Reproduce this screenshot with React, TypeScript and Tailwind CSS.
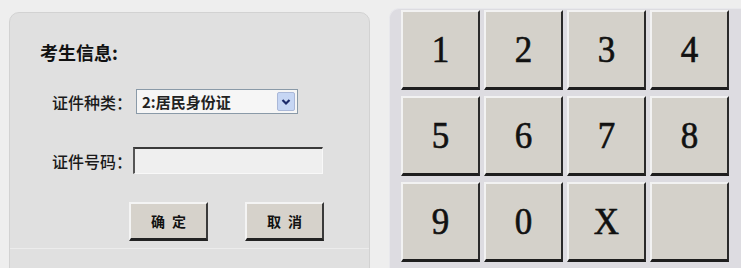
import React from "react";

const cjk = { fontFamily: '"Noto Sans CJK SC", "Noto Sans", sans-serif' };

function KeyBtn({ label }: { label: string }) {
  return (
    <div className="flex items-center justify-center bg-[#d4d1ca] border-t-2 border-l-2 border-t-[#f2f2f2] border-l-[#f2f2f2] border-r-2 border-b-[3px] border-r-[#2a2a2a] border-b-[#1e1e1e] text-[35px] text-[#111] leading-none [-webkit-text-stroke:0.6px_#111]" style={{ fontFamily: '"Liberation Serif", "Times New Roman", serif' }}>
      <span className="inline-block scale-y-[1.08]">{label}</span>
    </div>
  );
}

function FormBtn({ label }: { label: string }) {
  return (
    <div className="w-[79px] h-[39px] flex items-center justify-center bg-[#d6d2cb] border-t-2 border-l-2 border-t-[#f4f4f4] border-l-[#f4f4f4] border-r-2 border-b-[3px] border-r-[#3a3a3a] border-b-[#222] text-[14px] font-bold text-[#111] tracking-[7px] pl-[7px]" style={cjk}>
      {label}
    </div>
  );
}

export default function App() {
  const keys = ["1", "2", "3", "4", "5", "6", "7", "8", "9", "0", "X", ""];
  return (
    <div className="w-[741px] h-[268px] bg-[#eeeeee] flex overflow-hidden">
      <div className="ml-[9px] mt-[12px] w-[361px] h-[270px] rounded-t-[10px] bg-[#e0e0e0] border border-[#d2d2d2] pl-[30px] pt-[29px] flex flex-col" style={cjk}>
        <div className="h-[20px] leading-[20px] text-[18px] font-bold text-[#111]">考生信息:</div>
        <div className="ml-[12px] mt-[27px] flex items-center h-[25px]">
          <div className="w-[84px] text-[16px] font-medium text-[#1a1a1a]">证件种类：</div>
          <div className="w-[162px] h-[25px] bg-[#f6f6f6] border border-[#8a9aa8] flex items-center pl-[5px] pr-[2px]">
            <span className="flex-1 text-[15px] font-bold text-[#222] leading-none">2:居民身份证</span>
            <div className="w-[18px] h-[19px] rounded-[2px] bg-[#c6d6f4] border border-[#aab8d8] flex items-center justify-center">
              <svg width="10" height="8" viewBox="0 0 10 8">
                <path d="M1.5 2 L5 5.5 L8.5 2" stroke="#1c2a6a" strokeWidth="2.2" fill="none" />
              </svg>
            </div>
          </div>
        </div>
        <div className="ml-[12px] mt-[33px] flex items-center h-[27px]">
          <div className="w-[81px] text-[16px] font-medium text-[#1a1a1a]">证件号码：</div>
          <div className="w-[190px] h-[27px] bg-[#efefef] border-t-2 border-l-2 border-t-[#3a3a3a] border-l-[#555] border-r border-b border-r-[#f8f8f8] border-b-[#f8f8f8]" />
        </div>
        <div className="mt-[28px] ml-[89px] flex gap-[37px]">
          <FormBtn label="确定" />
          <FormBtn label="取消" />
        </div>
        <div className="mt-[7px] -ml-[30px] h-px bg-[#ececec]" />
      </div>
      <div className="ml-[19px] mt-[8px] flex-1 h-[270px] rounded-tl-[10px] bg-[#dddce1] border-l border-t border-[#e8e8ec] pl-[11px] pt-[1px]">
        <div className="grid grid-cols-[79px_79px_79px_79px] grid-rows-[80px_80px_80px] gap-x-[4px] gap-y-[6px]">
          {keys.map((k, i) => (
            <KeyBtn key={i} label={k} />
          ))}
        </div>
      </div>
    </div>
  );
}
